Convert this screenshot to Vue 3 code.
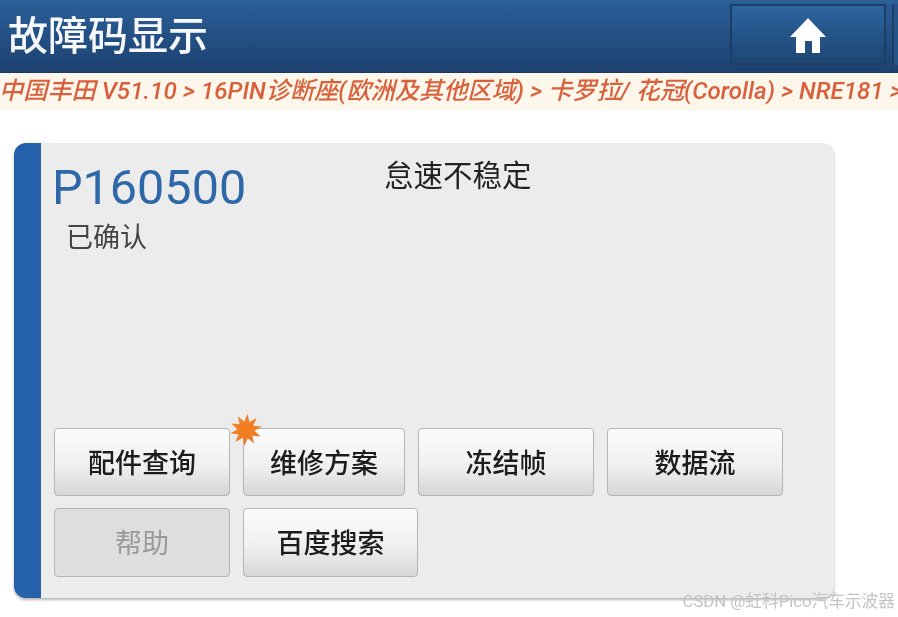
<template>
  <div class="page">
    <header class="top">
      <h1 class="title">故障码显示</h1>
      <button class="home" type="button" aria-label="home">
        <svg viewBox="0 0 38 38" width="38" height="38">
          <path d="M19 2 L37 21 H31 V37 H23 V25 H16 V37 H7 V21 H1 Z" fill="#fff" />
        </svg>
      </button>
      <span class="home-next"></span>
    </header>
    <div class="crumbs">中国丰田 V51.10 &gt; 16PIN诊断座(欧洲及其他区域) &gt; 卡罗拉/ 花冠(Corolla) &gt; NRE181 &gt;</div>
    <section class="card">
      <div class="info">
        <div class="code-col">
          <div class="code">P160500</div>
          <div class="state">已确认</div>
        </div>
        <div class="desc">怠速不稳定</div>
      </div>
      <div class="rows">
        <div class="row">
          <button v-for="b in firstRow" :key="b.label" class="btn" :class="b.cls" type="button">
            {{ b.label }}
            <svg v-if="b.star" class="star" viewBox="0 0 32 32" width="32" height="32">
              <polygon fill="#f07f24" :points="starPoints" />
            </svg>
          </button>
        </div>
        <div class="row">
          <button class="btn w176 off tall" type="button" disabled>帮助</button>
          <button class="btn w175 tall" type="button">百度搜索</button>
        </div>
      </div>
    </section>
    <div class="mark">CSDN @虹科Pico汽车示波器</div>
  </div>
</template>

<script setup>
const firstRow = [
  { label: '配件查询', cls: 'w176' },
  { label: '维修方案', cls: 'w162', star: true },
  { label: '冻结帧', cls: 'w176' },
  { label: '数据流', cls: 'w176' },
]

// 10-point burst for the "new" marker on the repair plan button
const starPoints = Array.from({ length: 20 }, (_, i) => {
  const r = i % 2 ? 8.5 : 16
  const a = (i * Math.PI) / 10 - Math.PI / 2 + 0.1
  return `${(16 + r * Math.cos(a)).toFixed(1)},${(16 + r * Math.sin(a)).toFixed(1)}`
}).join(' ')
</script>

<style>
html, body { background: #fff; }
body { overflow: hidden; }
</style>

<style scoped>
.page {
  position: relative;
  width: 898px;
  height: 617px;
  overflow: hidden;
  background: #fff;
  font-family: "Roboto", "Noto Sans CJK SC", sans-serif;
  filter: blur(0.45px);
}
.top {
  display: flex;
  align-items: center;
  height: 73px;
  padding-left: 8px;
  box-sizing: border-box;
  background: linear-gradient(#2a5f98, #1d4170);
  border-bottom: 1px solid #1b3a62;
}
.title {
  flex: 1;
  margin: -7px 0 0;
  font-size: 40px;
  line-height: 50px;
  font-weight: 500;
  color: #f6f8fb;
  font-family: "Noto Sans CJK SC", sans-serif;
}
.home {
  display: flex;
  align-items: center;
  justify-content: center;
  width: 156px;
  height: 61px;
  margin: -3px 0 0;
  padding: 0;
  box-sizing: border-box;
  background: linear-gradient(#2b659f, #1e4573);
  border: 2px solid #1c3d66;
}
.home-next {
  width: 4px;
  height: 61px;
  margin: -3px 0 0 6px;
  background: #24548a;
  border-left: 2px solid #1c3d66;
}
.crumbs {
  height: 37px;
  margin-left: -1px;
  line-height: 37px;
  background: #fdf6ea;
  color: #d9603c;
  font-size: 24.2px;
  font-weight: 500;
  font-style: italic;
  white-space: nowrap;
  overflow: hidden;
}
.card {
  display: flex;
  flex-direction: column;
  justify-content: space-between;
  width: 820px;
  height: 455px;
  margin: 33px 0 0 14px;
  padding: 0 0 21px 13px;
  box-sizing: border-box;
  background: #ececec;
  border-left: 27px solid #2560ab;
  border-radius: 12px;
  box-shadow: 0 2px 3px #b5b5b5;
}
.info {
  display: flex;
}
.code-col {
  width: 330px;
  padding-top: 16px;
}
.code {
  margin-left: -2px;
  font-size: 48.5px;
  line-height: 58px;
  color: #2f68a8;
}
.state {
  margin: 3px 0 0 12px;
  font-size: 27px;
  line-height: 32px;
  color: #444;
  font-family: "Noto Sans CJK SC", sans-serif;
}
.desc {
  margin-top: 11px;
  font-size: 29.5px;
  line-height: 38px;
  color: #222;
  font-family: "Noto Sans CJK SC", sans-serif;
}
.rows {
  display: flex;
  flex-direction: column;
  gap: 12px;
}
.row {
  display: flex;
  gap: 13px;
}
.btn {
  position: relative;
  height: 68px;
  padding: 0 0 2px;
  box-sizing: border-box;
  border: 1px solid #b4b4b4;
  border-radius: 4px;
  background: linear-gradient(#fcfcfc 0%, #f0f0f0 55%, #d6d6d6 100%);
  color: #1c1c1c;
  font-size: 27px;
  font-weight: 500;
  font-family: "Noto Sans CJK SC", sans-serif;
}
.tall { height: 69px; }
.w176 { width: 176px; }
.w175 { width: 175px; }
.w162 { width: 162px; }
.off {
  background: #dedede;
  color: #999;
  font-weight: 400;
}
.star {
  position: absolute;
  left: -14px;
  top: -15px;
}
.mark {
  position: absolute;
  right: 3px;
  bottom: 4px;
  font-size: 16.7px;
  line-height: 22px;
  color: #c4c4c4;
}
</style>
